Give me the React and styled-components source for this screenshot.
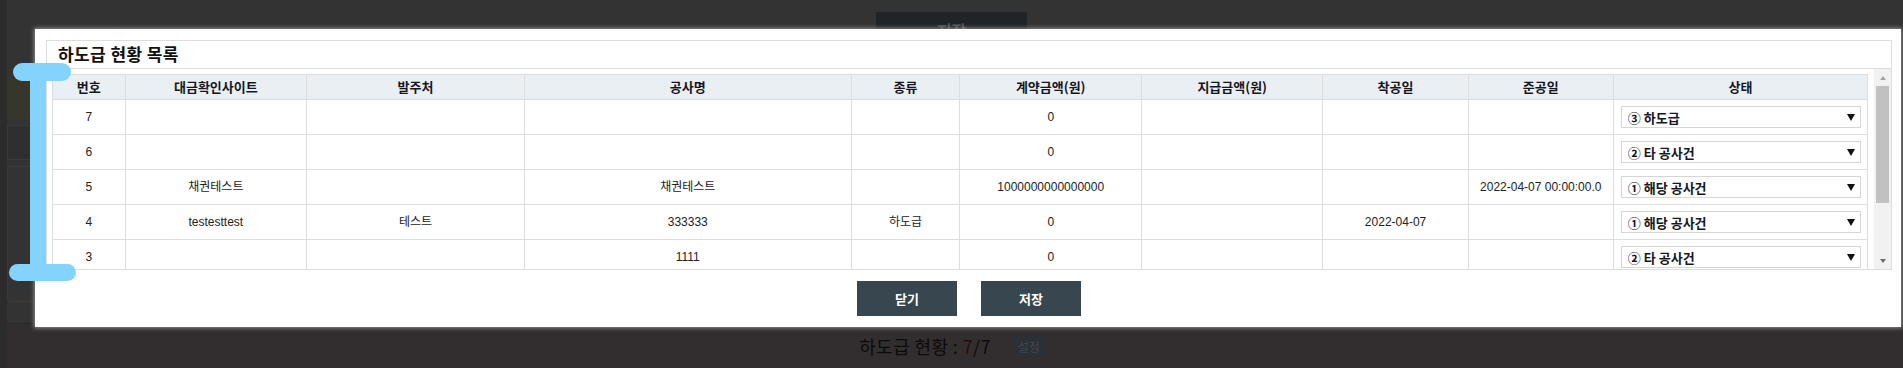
import React from 'react';
import styled, { createGlobalStyle } from 'styled-components';

const GlobalStyle = createGlobalStyle`
  html, body {
    margin: 0;
    padding: 0;
    background: #333333;
  }
  body {
    font-family: "Liberation Sans", "Noto Sans CJK KR", sans-serif;
  }
  * {
    box-sizing: border-box;
  }
`;

const Page = styled.div`
  position: relative;
  width: 1903px;
  height: 368px;
  overflow: hidden;
  display: flex;
  flex-direction: column;
  background: linear-gradient(to right, #2c2c2c 7px, #333333 7px);
`;

const TopBar = styled.div`
  display: flex;
  justify-content: center;
  padding-top: 12px;
  height: 52px;
  flex-shrink: 0;
`;

const DimButton = styled.button`
  width: 151px;
  height: 36px;
  border: none;
  background: #202427;
  color: #4b5055;
  font-family: "Noto Sans CJK KR", sans-serif;
  font-size: 16px;
  font-weight: bold;
`;

const Middle = styled.div`
  flex: 1;
  display: flex;
  flex-direction: column;
  gap: 6px;
  padding: 23px 0 0 7px;
`;

const SideBox = styled.div`
  width: 280px;
  height: ${p => p.$h}px;
  background: ${p => p.$bg || 'transparent'};
  border: 1px solid ${p => p.$line || 'transparent'};
  border-radius: ${p => p.$round ? '4px' : '0'};
`;

const Footer = styled.footer`
  height: 45px;
  flex-shrink: 0;
  margin-left: 7px;
  padding-right: 6px;
  background: #322e2f;
  border-top: 1px solid #2a2728;
  display: flex;
  align-items: center;
  justify-content: center;
  gap: 22px;
`;

const FooterText = styled.span`
  font-family: "Noto Sans CJK KR", sans-serif;
  font-size: 18px;
  letter-spacing: 0.4px;
  color: #0c0a0a;
`;

const Count = styled.span`
  color: #2c0909;
`;

const DimSmall = styled.span`
  width: 32px;
  height: 22px;
  display: flex;
  align-items: center;
  justify-content: center;
  background: #2a3035;
  color: #41464c;
  font-family: "Noto Sans CJK KR", sans-serif;
  font-size: 12px;
`;

const Modal = styled.div`
  position: absolute;
  left: 35px;
  top: 29px;
  width: 1866px;
  padding: 11px 9px 11px 11px;
  background: #ffffff;
  box-shadow: 0 0 4px 1px rgba(175, 175, 175, 0.75);
`;

const Panel = styled.section`
  border: 1px solid #dddddd;
`;

const PanelTitle = styled.h2`
  margin: 0;
  height: 28px;
  padding-left: 11px;
  border-bottom: 1px solid #dddddd;
  font-family: "Noto Sans CJK KR", sans-serif;
  font-size: 17px;
  font-weight: bold;
  letter-spacing: 0.4px;
  line-height: 26px;
  color: #111111;
`;

const PanelBody = styled.div`
  display: flex;
  height: 200px;
`;

const TableWrap = styled.div`
  flex: 1;
  min-width: 0;
  overflow: hidden;
  padding: 5px 6px 0 5px;
`;

const Grid = styled.table`
  width: 100%;
  table-layout: fixed;
  border-collapse: collapse;
`;

const Th = styled.th`
  height: 25px;
  padding: 0;
  border: 1px solid #dddddd;
  background: #eaeff4;
  font-family: "Noto Sans CJK KR", sans-serif;
  font-size: 13px;
  font-weight: bold;
  line-height: 16px;
  color: #16161f;
  text-align: center;
`;

const Td = styled.td`
  height: 35px;
  padding: ${p => p.$status ? '0 6px 0 7px' : '0 4px'};
  border: 1px solid #dddddd;
  font-size: 12px;
  line-height: 14px;
  color: #222222;
  text-align: center;
  white-space: nowrap;
  overflow: hidden;
`;

const StatusBox = styled.span`
  position: relative;
  display: block;

  &::after {
    content: '';
    position: absolute;
    right: 6px;
    top: 8px;
    border-left: 4px solid transparent;
    border-right: 4px solid transparent;
    border-top: 7px solid #111111;
    pointer-events: none;
  }
`;

const Select = styled.select`
  display: block;
  width: 100%;
  height: 22px;
  padding: 0 20px 0 6px;
  border: 1px solid #d6d6d6;
  border-radius: 0;
  background: #ffffff;
  appearance: none;
  font-family: "Noto Sans CJK KR", sans-serif;
  font-size: 13px;
  font-weight: bold;
  color: #16161e;
  outline: none;
`;

const ScrollTrack = styled.div`
  width: 17px;
  flex-shrink: 0;
  display: flex;
  flex-direction: column;
  align-items: center;
  background: #f1f1f1;
`;

const ScrollArrow = styled.div`
  width: 100%;
  height: 17px;
  display: flex;
  align-items: center;
  justify-content: center;

  &::before {
    content: '';
    border-left: 3.5px solid transparent;
    border-right: 3.5px solid transparent;
    ${p => p.$down
      ? 'border-top: 4px solid #6a6a6a;'
      : 'border-bottom: 4px solid #a3a3a3;'}
  }
`;

const Thumb = styled.div`
  width: 13px;
  height: 117px;
  background: #c1c1c1;
`;

const Spacer = styled.div`
  flex: 1;
`;

const ButtonRow = styled.div`
  display: flex;
  justify-content: center;
  gap: 24px;
  margin-top: 11px;
`;

const ActionButton = styled.button`
  width: 100px;
  height: 35px;
  border: none;
  background: #37464f;
  color: #ffffff;
  font-family: "Noto Sans CJK KR", sans-serif;
  font-size: 13px;
  font-weight: bold;
`;

const Marker = styled.div`
  position: absolute;
  background: #83d3fd;
  border-radius: ${p => p.$radius || 0}px;
`;

const columns = [
  { label: '번호', width: 4 },
  { label: '대금확인사이트', width: 10 },
  { label: '발주처', width: 12 },
  { label: '공사명', width: 18 },
  { label: '종류', width: 6 },
  { label: '계약금액(원)', width: 10 },
  { label: '지급금액(원)', width: 10 },
  { label: '착공일', width: 8 },
  { label: '준공일', width: 8 },
  { label: '상태', width: 14 },
];

const statusOptions = ['① 해당 공사건', '② 타 공사건', '③ 하도급'];

const rows = [
  { no: 7, site: '', client: '', name: '', kind: '', contract: '0', paid: '', start: '', end: '', status: '③ 하도급' },
  { no: 6, site: '', client: '', name: '', kind: '', contract: '0', paid: '', start: '', end: '', status: '② 타 공사건' },
  { no: 5, site: '채권테스트', client: '', name: '채권테스트', kind: '', contract: '1000000000000000', paid: '', start: '', end: '2022-04-07 00:00:00.0', status: '① 해당 공사건' },
  { no: 4, site: 'testesttest', client: '테스트', name: '333333', kind: '하도급', contract: '0', paid: '', start: '2022-04-07', end: '', status: '① 해당 공사건' },
  { no: 3, site: '', client: '', name: '1111', kind: '', contract: '0', paid: '', start: '', end: '', status: '② 타 공사건' },
];

export default function App() {
  return (
    <>
      <GlobalStyle />
      <Page>
        <TopBar>
          <DimButton>저장</DimButton>
        </TopBar>
        <Middle>
          <SideBox $h={44} $bg="#37362b" />
          <SideBox $h={35} $bg="#2f2f2f" $line="#3a3a3a" />
          <SideBox $h={136} $line="#3b3b3b" $round />
        </Middle>
        <Footer>
          <FooterText>
            하도급 현황 : <Count>7</Count>/7
          </FooterText>
          <DimSmall>설정</DimSmall>
        </Footer>

        <Modal>
          <Panel>
            <PanelTitle>하도급 현황 목록</PanelTitle>
            <PanelBody>
              <TableWrap>
                <Grid>
                  <colgroup>
                    {columns.map(c => (
                      <col key={c.label} style={{ width: c.width + '%' }} />
                    ))}
                  </colgroup>
                  <thead>
                    <tr>
                      {columns.map(c => (
                        <Th key={c.label}>{c.label}</Th>
                      ))}
                    </tr>
                  </thead>
                  <tbody>
                    {rows.map(r => (
                      <tr key={r.no}>
                        <Td>{r.no}</Td>
                        <Td>{r.site}</Td>
                        <Td>{r.client}</Td>
                        <Td>{r.name}</Td>
                        <Td>{r.kind}</Td>
                        <Td>{r.contract}</Td>
                        <Td>{r.paid}</Td>
                        <Td>{r.start}</Td>
                        <Td>{r.end}</Td>
                        <Td $status>
                          <StatusBox>
                            <Select defaultValue={r.status}>
                              {statusOptions.map(o => (
                                <option key={o} value={o}>{o}</option>
                              ))}
                            </Select>
                          </StatusBox>
                        </Td>
                      </tr>
                    ))}
                  </tbody>
                </Grid>
              </TableWrap>
              <ScrollTrack>
                <ScrollArrow />
                <Thumb />
                <Spacer />
                <ScrollArrow $down />
              </ScrollTrack>
            </PanelBody>
          </Panel>
          <ButtonRow>
            <ActionButton>닫기</ActionButton>
            <ActionButton>저장</ActionButton>
          </ButtonRow>
        </Modal>

        <Marker style={{ left: 13, top: 63, width: 58, height: 18 }} $radius={9} />
        <Marker style={{ left: 30, top: 72, width: 16, height: 200 }} />
        <Marker style={{ left: 9, top: 264, width: 67, height: 17 }} $radius={9} />
      </Page>
    </>
  );
}
